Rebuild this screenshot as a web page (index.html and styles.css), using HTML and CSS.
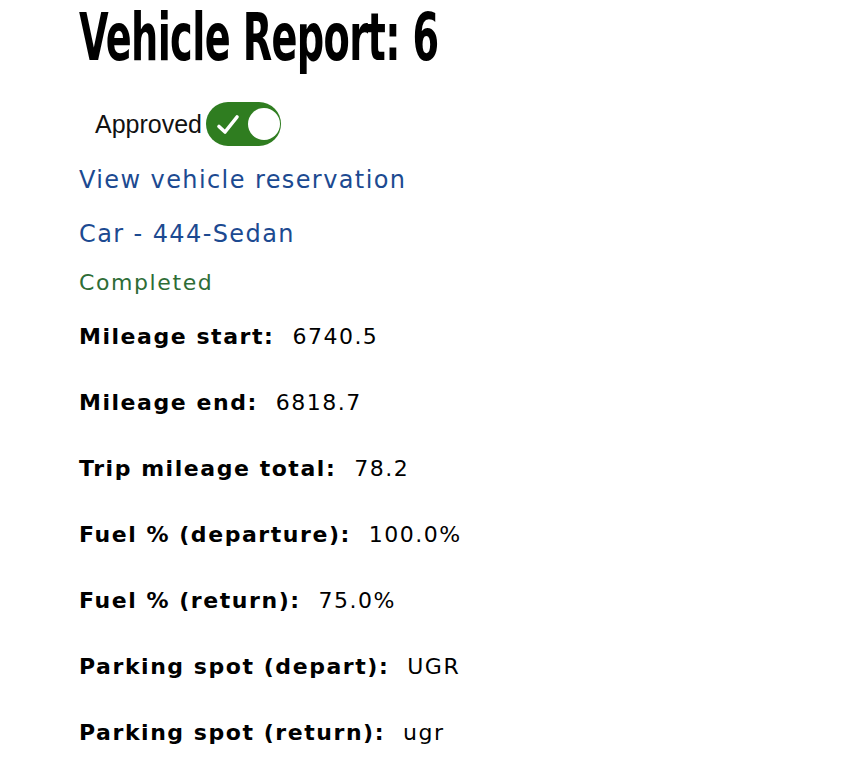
FILE: index.html
```html
<!DOCTYPE html>
<html>
<head>
<meta charset="utf-8">
<link rel="stylesheet" href="styles.css">
</head>
<body>
<main class="page">
  <h1 class="title">Vehicle Report: 6</h1>
  <div class="approved">
    <span class="approved-label">Approved</span>
    <svg class="toggle" width="75" height="44" viewBox="0 0 75 44">
      <rect x="0" y="0" width="75" height="44" rx="22" fill="#2f7d20"/>
      <path d="M13 24.5 L19 30 L31 15" fill="none" stroke="#fff" stroke-width="3.6" stroke-linecap="round" stroke-linejoin="round"/>
      <circle cx="58" cy="22" r="16" fill="#fff"/>
    </svg>
  </div>
  <a class="link" href="#">View vehicle reservation</a>
  <a class="link" href="#">Car - 444-Sedan</a>
  <div class="status">Completed</div>
  <dl class="fields">
    <div class="row"><dt>Mileage start:</dt><dd>6740.5</dd></div>
    <div class="row"><dt>Mileage end:</dt><dd>6818.7</dd></div>
    <div class="row"><dt>Trip mileage total:</dt><dd>78.2</dd></div>
    <div class="row"><dt>Fuel % (departure):</dt><dd>100.0%</dd></div>
    <div class="row"><dt>Fuel % (return):</dt><dd>75.0%</dd></div>
    <div class="row"><dt>Parking spot (depart):</dt><dd>UGR</dd></div>
    <div class="row"><dt>Parking spot (return):</dt><dd>ugr</dd></div>
  </dl>
</main>
</body>
</html>
```
FILE: styles.css
```css
html, body { margin: 0; padding: 0; background: #fff; }
body { font-family: "DejaVu Sans", sans-serif; color: #000; }
.page { padding: 0 0 0 79px; display: flex; flex-direction: column; align-items: flex-start; }
.title {
  font-family: "DejaVu Sans Condensed", "Liberation Sans Narrow", sans-serif;
  font-weight: 700; font-size: 66px; line-height: 76px; margin: 0; letter-spacing: -1px;
  transform: scaleX(0.645); transform-origin: left center; white-space: nowrap;
}
.approved { display: flex; align-items: center; margin: 26px 0 0 16px; }
.approved-label { font-family: "Liberation Sans", sans-serif; font-size: 25px; color: #111; }
.toggle { margin-left: 4px; display: block; }
.link { font-size: 24px; letter-spacing: 1.4px; color: #1c4a91; text-decoration: none; margin-top: 14px; line-height: 40px; }
.link + .link { margin-top: 14px; }
.status { color: #2e6d36; font-size: 22px; letter-spacing: 1.6px; margin-top: 14px; line-height: 30px; }
.fields { margin: 26px 0 0; }
.row { display: flex; align-items: baseline; height: 66px; font-size: 22px; letter-spacing: 1.55px; }
.row dt { font-weight: 700; }
.row dd { margin: 0 0 0 18px; letter-spacing: 1.5px; }
```
